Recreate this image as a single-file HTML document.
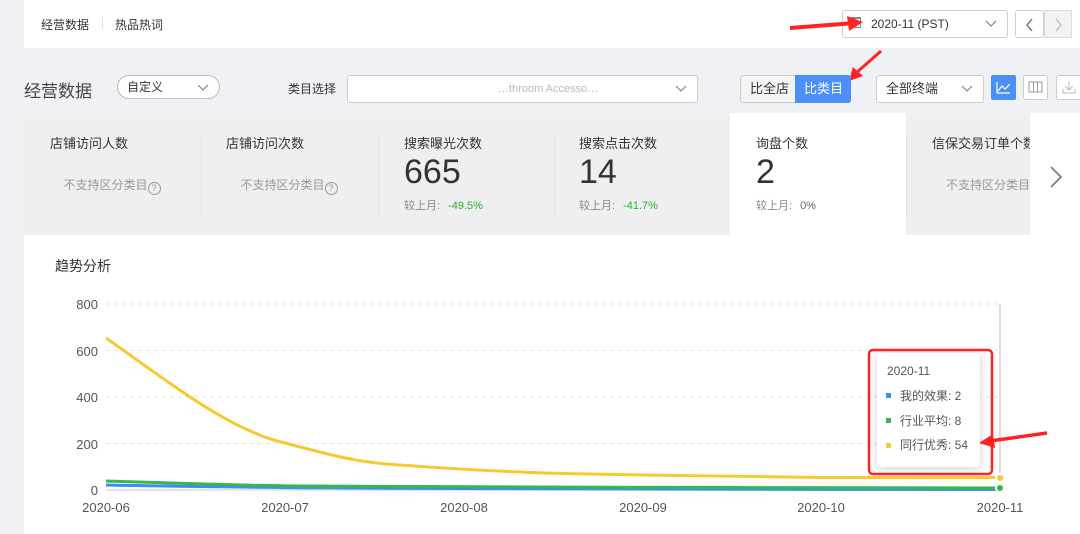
<!DOCTYPE html>
<html><head><meta charset="utf-8"><style>
*{margin:0;padding:0;box-sizing:border-box}
body{width:1080px;height:534px;overflow:hidden;background:#f0f1f5;font-family:"Liberation Sans","Noto Sans CJK SC",sans-serif;color:#333;position:relative}
.a{position:absolute}
.sel{position:absolute;background:#fff;border:1px solid #ccc;border-radius:3px;font-size:13px;color:#333;line-height:26px}
.chev{position:absolute;right:10px;top:8px}
.card{position:absolute;top:113px;height:122px;background:#efefef}
.card .t{position:absolute;left:26px;top:20px;font-size:13px;color:#333}
.card .n{position:absolute;left:26px;top:40px;font-size:34px;color:#333}
.card .c{position:absolute;left:26px;top:84px;font-size:11px;color:#888}
.card .ns{position:absolute;left:0;width:100%;text-align:center;top:63px;font-size:12px;color:#999}
.q{display:inline-block;width:13px;height:13px;border:1px solid #999;border-radius:50%;font-size:9px;line-height:11px;text-align:center;vertical-align:-2px}
.g{color:#1fb723;margin-left:8px}
.sep{position:absolute;top:22px;width:1px;height:84px;background:#dde2ee}
</style></head><body>
<div class="a" style="left:24px;top:0;width:1056px;height:48px;background:#fff"></div>
<div class="a" style="left:41px;top:16px;font-size:12px;color:#333">经营数据</div>
<div class="a" style="left:102px;top:17px;width:1px;height:12px;background:#ddd"></div>
<div class="a" style="left:115px;top:16px;font-size:12px;color:#333">热品热词</div>
<div class="sel" style="left:842px;top:10px;width:166px;height:28px;padding-left:28px;font-size:12px">2020-11 (PST)<svg class="chev" width="12" height="10"><path d="M1 2L6 7L11 2" stroke="#777" fill="none"/></svg></div>
<div class="a" style="left:851px;top:17px;width:10px;height:11px;border:1px solid #888;border-top-width:2px"></div>
<div class="sel" style="left:1015px;top:10px;width:29px;height:28px"><svg class="a" style="left:9px;top:7px" width="10" height="14"><path d="M7 1L2 7L7 13" stroke="#666" fill="none" stroke-width="1.3"/></svg></div>
<div class="a" style="left:1044px;top:10px;width:28px;height:28px;background:#f2f2f2;border:1px solid #ddd"><svg class="a" style="left:9px;top:7px" width="10" height="14"><path d="M2 1L7 7L2 13" stroke="#bbb" fill="none" stroke-width="1.3"/></svg></div>
<svg class="a" style="left:785px;top:14px" width="90" height="20"><path d="M5 14 L70 9" stroke="#f22" stroke-width="4"/><path d="M62 2 L78 8 L64 17Z" fill="#f22"/></svg>
<svg class="a" style="left:845px;top:48px" width="40" height="36"><path d="M36 3 L10 26" stroke="#f22" stroke-width="3"/><path d="M4 33 L8 19 L18 28Z" fill="#f22"/></svg>

<div class="a" style="left:24px;top:77px;font-size:17px;color:#444">经营数据</div>
<div class="sel" style="left:117px;top:75px;width:103px;height:24px;border-radius:12px;padding-left:9px;font-size:12px;line-height:22px;border-color:#bbb">自定义<svg class="chev" style="top:7px" width="12" height="10"><path d="M1 2L6 7L11 2" stroke="#777" fill="none"/></svg></div>
<div class="a" style="left:288px;top:80px;font-size:12px">类目选择</div>
<div class="sel" style="left:347px;top:75px;width:351px;height:28px;padding-left:150px;font-size:11px;color:#bbb">…throom Accesso…<svg class="chev" width="12" height="10"><path d="M1 2L6 7L11 2" stroke="#777" fill="none"/></svg></div>
<div class="sel" style="left:740px;top:75px;width:56px;height:28px;padding-left:9px;background:#f4f4f4;border-radius:3px 0 0 3px">比全店</div>
<div class="a" style="left:795px;top:75px;width:56px;height:28px;background:#4d8ff8;color:#fff;font-size:13px;line-height:28px;padding-left:9px;border-radius:0 3px 3px 0">比类目</div>
<div class="sel" style="left:876px;top:75px;width:108px;height:28px;padding-left:9px">全部终端<svg class="chev" width="12" height="10"><path d="M1 2L6 7L11 2" stroke="#777" fill="none"/></svg></div>
<div class="a" style="left:991px;top:75px;width:25px;height:25px;background:#4d8ff8;border-radius:2px"></div>
<svg class="a" style="left:991px;top:75px" width="25" height="25"><path d="M6 7 V18 H19 M7 16 L11 11 L14 14 L19 9" stroke="#fff" fill="none" stroke-width="1.2"/></svg>
<div class="sel" style="left:1023px;top:75px;width:25px;height:25px"></div>
<svg class="a" style="left:1023px;top:75px" width="25" height="25"><rect x="6" y="7" width="13" height="10" stroke="#999" fill="none"/><path d="M10.5 7V17M14.5 7V17" stroke="#999"/></svg>
<div class="sel" style="left:1056px;top:75px;width:30px;height:25px"></div>
<svg class="a" style="left:1056px;top:75px" width="25" height="25"><path d="M13 6V15 M9 11L13 15L17 11 M7 14V18H19V14" stroke="#bbb" fill="none"/></svg>

<div class="card" style="left:24px;width:176px"><div class="t">店铺访问人数</div><div class="ns">不支持区分类目<span class="q">?</span></div></div>
<div class="card" style="left:200px;width:178px"><div class="sep" style="left:1px"></div><div class="t">店铺访问次数</div><div class="ns">不支持区分类目<span class="q">?</span></div></div>
<div class="card" style="left:378px;width:175px"><div class="sep" style="left:0"></div><div class="t">搜索曝光次数</div><div class="n">665</div><div class="c">较上月:<span class="g">-49.5%</span></div></div>
<div class="card" style="left:553px;width:177px"><div class="sep" style="left:1px"></div><div class="t">搜索点击次数</div><div class="n">14</div><div class="c">较上月:<span class="g">-41.7%</span></div></div>
<div class="card" style="left:730px;width:176px;background:#fff"><div class="t">询盘个数</div><div class="n">2</div><div class="c">较上月:<span style="margin-left:8px;color:#666">0%</span></div></div>
<div class="card" style="left:906px;width:124px;overflow:hidden"><div class="sep" style="left:0"></div><div class="t" style="white-space:nowrap">信保交易订单个数</div><div class="ns" style="left:40px;text-align:left;width:200px">不支持区分类目</div></div>
<div class="card" style="left:1030px;width:50px;background:#fff"><svg class="a" style="left:19px;top:52px" width="14" height="24"><path d="M2 2L12 12L2 22" stroke="#777" fill="none" stroke-width="1.6"/></svg></div>

<div class="a" style="left:24px;top:235px;width:1056px;height:299px;background:#fff"></div>
<div class="a" style="left:55px;top:256px;font-size:14px;color:#333">趋势分析</div>
<svg class="a" style="left:0;top:0" width="1080" height="534" font-family="Liberation Sans" font-size="13" fill="#555">
<g stroke="#e4e4e4" stroke-dasharray="4 4"><path d="M106 304H1000M106 350.5H1000M106 397H1000M106 443.5H1000"/></g>
<path d="M106 490H1000" stroke="#ccc"/>
<path d="M1000 304V490" stroke="#bbb"/>
<g text-anchor="end"><text x="98" y="309">800</text><text x="98" y="356">600</text><text x="98" y="402">400</text><text x="98" y="449">200</text><text x="98" y="495">0</text></g>
<g text-anchor="middle"><text x="106" y="512">2020-06</text><text x="285" y="512">2020-07</text><text x="464" y="512">2020-08</text><text x="643" y="512">2020-09</text><text x="821" y="512">2020-10</text><text x="1000" y="512">2020-11</text></g>
<path d="M106 485 C200 487 300 489 1000 489.5" stroke="#3a8ef6" stroke-width="3" fill="none"/>
<path d="M106 481 C200 484 260 486 300 486 C500 487 800 488 1000 488" stroke="#36b84f" stroke-width="3" fill="none"/>
<path d="M106 338 C180 390 230 430 285 443 C330 455 360 463 400 465 C430 467 450 469 520 472 C560 474 600 474 643 475 C700 476 760 477 821 477.5 L1000 477.5" stroke="#f7c830" stroke-width="3" fill="none"/>
<circle cx="1000" cy="478" r="4" fill="#f7c830" stroke="#fff" stroke-width="2"/>
<circle cx="1000" cy="488" r="4" fill="#36b84f" stroke="#fff" stroke-width="2"/>
<rect x="877" y="353" width="103" height="114" rx="3" fill="#fff" style="filter:drop-shadow(0 1px 4px rgba(0,0,0,.2))"/>
<rect x="869" y="350" width="123" height="124" rx="4" fill="none" stroke="#f22" stroke-width="2.5"/>
<text x="887" y="375" font-size="12">2020-11</text>
<rect x="886" y="393" width="5" height="5" fill="#3a8ef6"/><text x="900" y="400" font-size="12">我的效果: 2</text>
<rect x="886" y="418" width="5" height="5" fill="#36b84f"/><text x="900" y="425" font-size="12">行业平均: 8</text>
<rect x="886" y="443" width="5" height="5" fill="#f7c830"/><text x="900" y="449" font-size="12">同行优秀: 54</text>
<path d="M1047 433 L990 441" stroke="#f22" stroke-width="3.5"/><path d="M979 443 L993 434 L995 448Z" fill="#f22"/>
</svg>
</body></html>
